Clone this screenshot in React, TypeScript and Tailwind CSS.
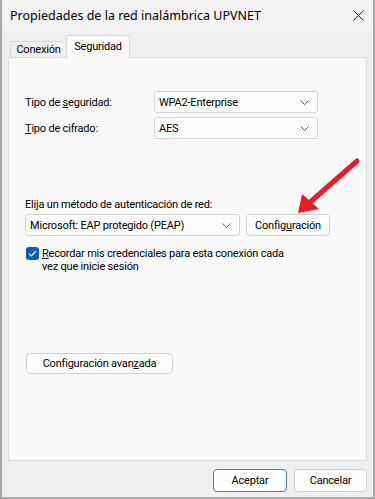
import React from "react";

const body = { fontFamily: 'Roboto, "Noto Sans", sans-serif', letterSpacing: "-0.2px" };
const titleFont = { fontFamily: '"Noto Sans", "Open Sans", sans-serif', letterSpacing: "0px" };

function Chevron() {
  return (
    <svg width="9" height="5" viewBox="0 0 9 5" className="shrink-0">
      <path d="M0.5 0.5 L4.5 4.5 L8.5 0.5" fill="none" stroke="#5f5f5f" strokeWidth="1" />
    </svg>
  );
}

function Select({ value, width }: { value: string; width: string }) {
  return (
    <div
      className={`flex h-[22px] items-center justify-between rounded-[3px] border border-[#d4d4d4] bg-[#fdfdfd] pl-[4px] pr-[8px] text-black ${width}`}
    >
      <span className="whitespace-nowrap">{value}</span>
      <Chevron />
    </div>
  );
}

export default function App() {
  return (
    <div
      style={body}
      className="relative flex h-[499px] w-[375px] flex-col border-x-2 border-b-2 border-[#a9a9a9] bg-[#f0f0f0] text-[11px] leading-[13px] text-black"
    >
      {/* title bar */}
      <div className="flex h-[30px] items-center justify-between bg-[#f3f3f3] pl-[8px] pr-[9px]">
        <span style={titleFont} className="text-[12.5px]">
          Propiedades de la red inalámbrica UPVNET
        </span>
        <svg width="11" height="11" viewBox="0 0 11 11">
          <path d="M0.5 0.5 L10.5 10.5 M10.5 0.5 L0.5 10.5" stroke="#222" strokeWidth="1" />
        </svg>
      </div>

      {/* tabs */}
      <div className="relative z-10 flex h-[28px] items-end pl-[8px]">
        <div className="mb-[1px] flex h-[16px] w-[56px] items-center justify-center border-l border-t border-[#d9d9d9] bg-[#f0f0f0]">
          Conexión
        </div>
        <div className="flex h-[23px] w-[64px] items-center justify-center border-x border-t border-[#d9d9d9] bg-[#f9f9f9] pb-[2px]">
          Seguridad
        </div>
      </div>

      {/* panel */}
      <div className="-mt-px mx-[6px] flex h-[404px] flex-col border border-[#dcdcdc] bg-[#f9f9f9] pl-[16px] pt-[33px]">
        <div className="flex items-center">
          <span className="w-[129px]">
            Tipo de <span className="underline">s</span>eguridad:
          </span>
          <Select value="WPA2-Enterprise" width="w-[164px]" />
        </div>
        <div className="mt-[4px] flex items-center">
          <span className="w-[129px]">
            <span className="underline">T</span>ipo de cifrado:
          </span>
          <Select value="AES" width="w-[164px]" />
        </div>

        <div className="mt-[59px]">
          Eli<span className="underline">j</span>a un método de autenticación de red:
        </div>
        <div className="mt-[3px] flex items-center">
          <Select value="Microsoft: EAP protegido (PEAP)" width="w-[215px]" />
          <button className="ml-[6px] h-[22px] w-[84px] rounded-[4px] border border-[#d0d0d0] bg-[#fdfdfd]">
            Config<span className="underline">u</span>ración
          </button>
        </div>

        <div className="mt-[11px] flex items-start">
          <div className="ml-[1px] flex h-[13px] w-[13px] shrink-0 items-center justify-center rounded-[3px] bg-[#005fb8]">
            <svg width="9" height="7" viewBox="0 0 9 7">
              <path d="M1 3.6 L3.3 5.8 L8 1" fill="none" stroke="#fff" strokeWidth="1.2" />
            </svg>
          </div>
          <div className="ml-[3px]">
            <span className="underline">R</span>ecordar mis credenciales para esta conexión cada
            <br />
            vez que inicie sesión
          </div>
        </div>

        <button className="ml-[1px] mt-[80px] h-[21px] w-[147px] rounded-[4px] border border-[#d0d0d0] bg-[#fdfdfd]">
          Configuración avan<span className="underline">z</span>ada
        </button>
      </div>

      {/* footer */}
      <div className="flex justify-end gap-[7px] pr-[6px] pt-[8px]">
        <button className="h-[23px] w-[74px] rounded-[4px] border border-[#4f7f9d] bg-[#fdfdfd]">
          Aceptar
        </button>
        <button className="h-[23px] w-[73px] rounded-[4px] border border-[#d0d0d0] bg-[#fdfdfd]">
          Cancelar
        </button>
      </div>

      {/* red annotation arrow */}
      <svg className="pointer-events-none absolute left-0 top-0" width="375" height="499">
        <line x1="355" y1="161" x2="306" y2="204" stroke="#ec1c24" strokeWidth="5" strokeLinecap="round" />
        <polygon points="296,213 300,194 317,209" fill="#ec1c24" />
      </svg>
    </div>
  );
}
